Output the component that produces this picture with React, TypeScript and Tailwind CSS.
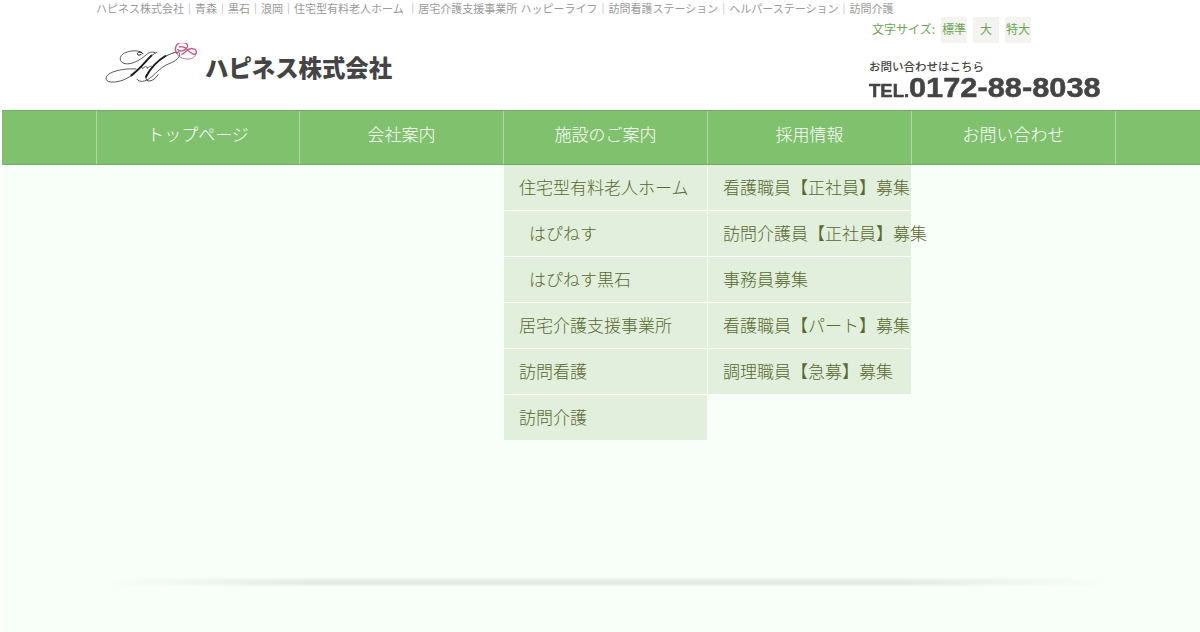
type MenuItem = {
  label: string;
  indent?: boolean;
};

type NavItem = {
  label: string;
  children?: MenuItem[];
};

const navItems: NavItem[] = [
  { label: 'トップページ' },
  { label: '会社案内' },
  {
    label: '施設のご案内',
    children: [
      { label: '住宅型有料老人ホーム' },
      { label: 'はぴねす', indent: true },
      { label: 'はぴねす黒石', indent: true },
      { label: '居宅介護支援事業所' },
      { label: '訪問看護' },
      { label: '訪問介護' },
    ],
  },
  {
    label: '採用情報',
    children: [
      { label: '看護職員【正社員】募集' },
      { label: '訪問介護員【正社員】募集' },
      { label: '事務員募集' },
      { label: '看護職員【パート】募集' },
      { label: '調理職員【急募】募集' },
    ],
  },
  { label: 'お問い合わせ' },
];

function LogoMark() {
  return (
    <svg className="h-[46px] w-[98px]" viewBox="12 15 294 138" fill="none" strokeLinecap="round" strokeLinejoin="round">
      <g stroke="#1c1c1c">
        <path d="M124 49C119 54 110 51 112 46C115 41 126 41 128 46" strokeWidth="3" />
        <path d="M128 46C122 36 92 36 74 45C55 54 57 73 75 77C96 81 122 65 139 50C146 43 156 40 165 44" strokeWidth="2.2" />
        <path d="M171 43C148 52 134 78 109 101C85 123 57 134 32 132C13 130 15 114 30 106C51 95 84 91 108 93" strokeWidth="2.2" />
        <path d="M154 53C134 73 118 95 94 112" strokeWidth="6" />
        <path d="M238 45C244 59 225 70 205 78C178 90 166 109 149 121C137 130 119 135 111 124" strokeWidth="2.2" />
        <path d="M236 42C208 42 176 68 158 86C145 100 132 119 141 127C150 133 166 124 174 110" strokeWidth="2.4" />
        <path d="M196 54C171 69 151 92 138 116" strokeWidth="6" />
        <path d="M112 96C122 86 128 84 127 92C136 84 142 84 141 91C150 83 156 84 158 86" strokeWidth="2" />
      </g>
      <g stroke="#c25a86" strokeWidth="4">
        <path d="M230 46C221 32 229 15 244 14C260 12 267 21 260 30C253 39 238 43 233 34" />
        <path d="M238 27C250 23 258 30 265 38C274 48 287 53 289 44C291 34 277 28 266 34C257 39 252 47 245 49" />
        <path d="M231 44C232 57 250 64 267 63C281 61 287 55 288 46" strokeWidth="2.5" />
      </g>
    </svg>
  );
}

function FontSizeSwitch() {
  return (
    <div className="ml-[776px] flex h-[26px] items-center text-[12px] text-[#69a653]">
      <span className="mr-1.5 w-[63px] whitespace-nowrap pb-[3px]">文字サイズ:</span>
      <div className="flex gap-1.5">
        {['標準', '大', '特大'].map((size) => (
          <button key={size} className="h-[26px] w-[26px] whitespace-nowrap rounded-[2px] bg-[#f3f4f0] pb-[3px] text-center leading-[23px]">
            {size}
          </button>
        ))}
      </div>
    </div>
  );
}

function Header() {
  return (
    <header className="h-[110px] bg-white pl-[96px]">
      <p className="h-[17px] whitespace-nowrap text-[11px] leading-[17px] text-[#999] [word-spacing:1px]">
        ハピネス株式会社｜青森｜黒石｜浪岡｜住宅型有料老人ホーム ｜居宅介護支援事業所 ハッピーライフ｜訪問看護ステーション｜ヘルパーステーション｜訪問介護
      </p>
      <FontSizeSwitch />
      <div className="flex">
        <div className="flex w-[773px] pl-2">
          <LogoMark />
          <h1 className="ml-[3px] mt-[6px] text-[23.4px] font-black leading-[36px] text-[#444]">ハピネス株式会社</h1>
        </div>
        <div className="whitespace-nowrap pt-[15px] text-[#444]">
          <p className="text-[11.5px] font-medium leading-4">お問い合わせはこちら</p>
          <p className="flex h-7 items-baseline font-['Liberation_Sans',sans-serif] font-bold leading-7 [-webkit-text-stroke:0.5px_#444]">
            <span className="w-10 origin-left scale-x-[1.06] text-[17.5px]">TEL.</span>
            <span className="origin-left scale-x-[1.14] text-[27px]">0172-88-8038</span>
          </p>
        </div>
      </div>
    </header>
  );
}

function SubMenu({ items }: { items: MenuItem[] }) {
  return (
    <ul className="absolute left-0 top-[54px] w-[203px]">
      {items.map((item) => (
        <li
          key={item.label}
          className={`h-[46px] whitespace-nowrap border-b border-white bg-[#e1efdc] text-left leading-[43px] text-[#59692f] last:h-[45px] last:border-b-0 ${item.indent ? 'pl-[25px]' : 'pl-[15px]'}`}
        >
          {item.label}
        </li>
      ))}
    </ul>
  );
}

function Nav() {
  return (
    <nav className="ml-[2px] h-[55px] border-y border-[#76ab67] bg-[#80c16e] pl-[94px] font-['Noto_Sans_CJK_JP',sans-serif] text-[17px] font-light text-white">
      <ul className="flex h-[53px] w-[1020px] border-r border-[#b0daa5]">
        {navItems.map((item) => (
          <li key={item.label} className="relative w-[204px] border-l border-[#b0daa5] text-center leading-[45px] first:w-[203px]">
            {item.label}
            {item.children && <SubMenu items={item.children} />}
          </li>
        ))}
      </ul>
    </nav>
  );
}

export default function App() {
  return (
    <div className="h-[632px] w-[1200px] overflow-hidden bg-white font-['Noto_Sans_CJK_JP',sans-serif]">
      <Header />
      <Nav />
      <main className="ml-[2px] h-[467px] bg-[#f7fff8] pl-[106px] pt-[412px]">
        <div className="h-[10px] w-[998px] bg-[linear-gradient(to_bottom,#f7fff8,#e4ebe4_40%,#e4ebe4_65%,#f7fff8)] [mask-image:linear-gradient(to_right,transparent,black_20%,black_80%,transparent)]" />
      </main>
    </div>
  );
}
